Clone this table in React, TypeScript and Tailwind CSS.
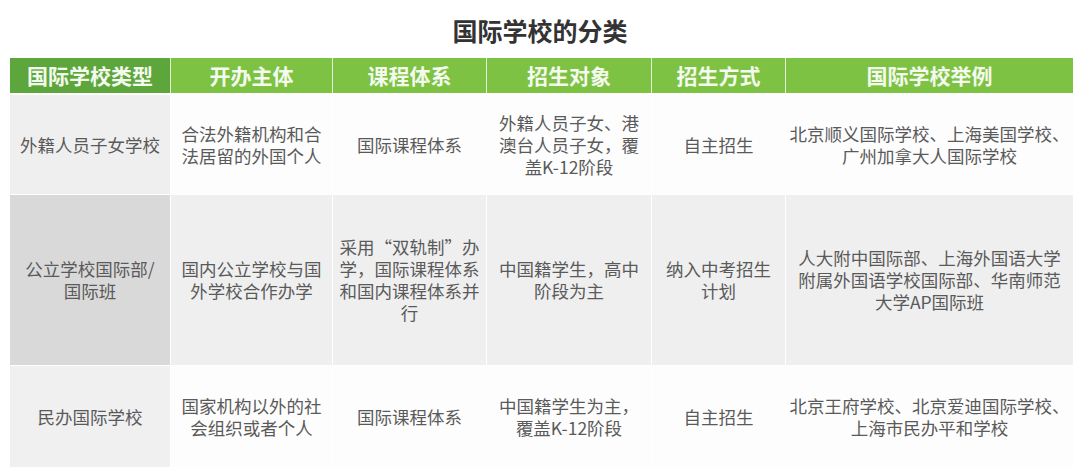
import React from "react";

const headers = ["国际学校类型", "开办主体", "课程体系", "招生对象", "招生方式", "国际学校举例"];

type Row = { height: string; first: string; rest: string; cells: string[][] };

const rows: Row[] = [
  {
    height: "h-[99px]",
    first: "bg-[#efefef]",
    rest: "bg-[#fdfdfd]",
    cells: [
      ["外籍人员子女学校"],
      ["合法外籍机构和合", "法居留的外国个人"],
      ["国际课程体系"],
      ["外籍人员子女、港", "澳台人员子女，覆", "盖K-12阶段"],
      ["自主招生"],
      ["北京顺义国际学校、上海美国学校、", "广州加拿大人国际学校"],
    ],
  },
  {
    height: "h-[170px]",
    first: "bg-[#d9d9d9]",
    rest: "bg-[#efefef]",
    cells: [
      ["公立学校国际部/", "国际班"],
      ["国内公立学校与国", "外学校合作办学"],
      ["采用“双轨制”办", "学，国际课程体系", "和国内课程体系并", "行"],
      ["中国籍学生，高中", "阶段为主"],
      ["纳入中考招生", "计划"],
      ["人大附中国际部、上海外国语大学", "附属外国语学校国际部、华南师范", "大学AP国际班"],
    ],
  },
  {
    height: "h-[101px]",
    first: "bg-[#f0f0f0]",
    rest: "bg-[#fdfdfd]",
    cells: [
      ["民办国际学校"],
      ["国家机构以外的社", "会组织或者个人"],
      ["国际课程体系"],
      ["中国籍学生为主，", "覆盖K-12阶段"],
      ["自主招生"],
      ["北京王府学校、北京爱迪国际学校、", "上海市民办平和学校"],
    ],
  },
];

export default function App() {
  return (
    <div
      className="w-[1080px] h-[473px] bg-white overflow-hidden"
      style={{ fontFamily: '"Microsoft YaHei", "Noto Sans CJK SC", "Noto Sans", sans-serif' }}
    >
      <h1 className="pt-[14px] text-center text-[25px] leading-[32px] font-bold text-[#333333]">
        国际学校的分类
      </h1>

      <div className="mt-[12px] ml-[10px] w-[1063px]">
        <div className="grid grid-cols-[160px_161px_153px_164px_133px_287px] gap-x-px h-[35px] bg-[#e6f3da]">
          {headers.map((h, i) => (
            <div
              key={h}
              className={`flex items-center justify-center text-[21px] font-bold text-[#f4faee] ${
                i === 0 ? "bg-[#5ca63c]" : "bg-[#7dc243]"
              }`}
            >
              {h}
            </div>
          ))}
        </div>

        <div className="mt-[2px] flex flex-col gap-px">
          {rows.map((row, r) => (
            <div
              key={r}
              className={`grid grid-cols-[160px_161px_153px_164px_133px_287px] gap-x-px ${row.height}`}
            >
              {row.cells.map((lines, c) => (
                <div
                  key={c}
                  className={`flex flex-col items-center justify-center text-center text-[17.5px] leading-[22px] text-[#5a5a5a] ${
                    c === 0 ? row.first : row.rest
                  }`}
                >
                  {lines.map((l, k) => (
                    <span key={k} className="block h-[22px] leading-[22px] whitespace-nowrap">
                      {l}
                    </span>
                  ))}
                </div>
              ))}
            </div>
          ))}
        </div>
      </div>
    </div>
  );
}
